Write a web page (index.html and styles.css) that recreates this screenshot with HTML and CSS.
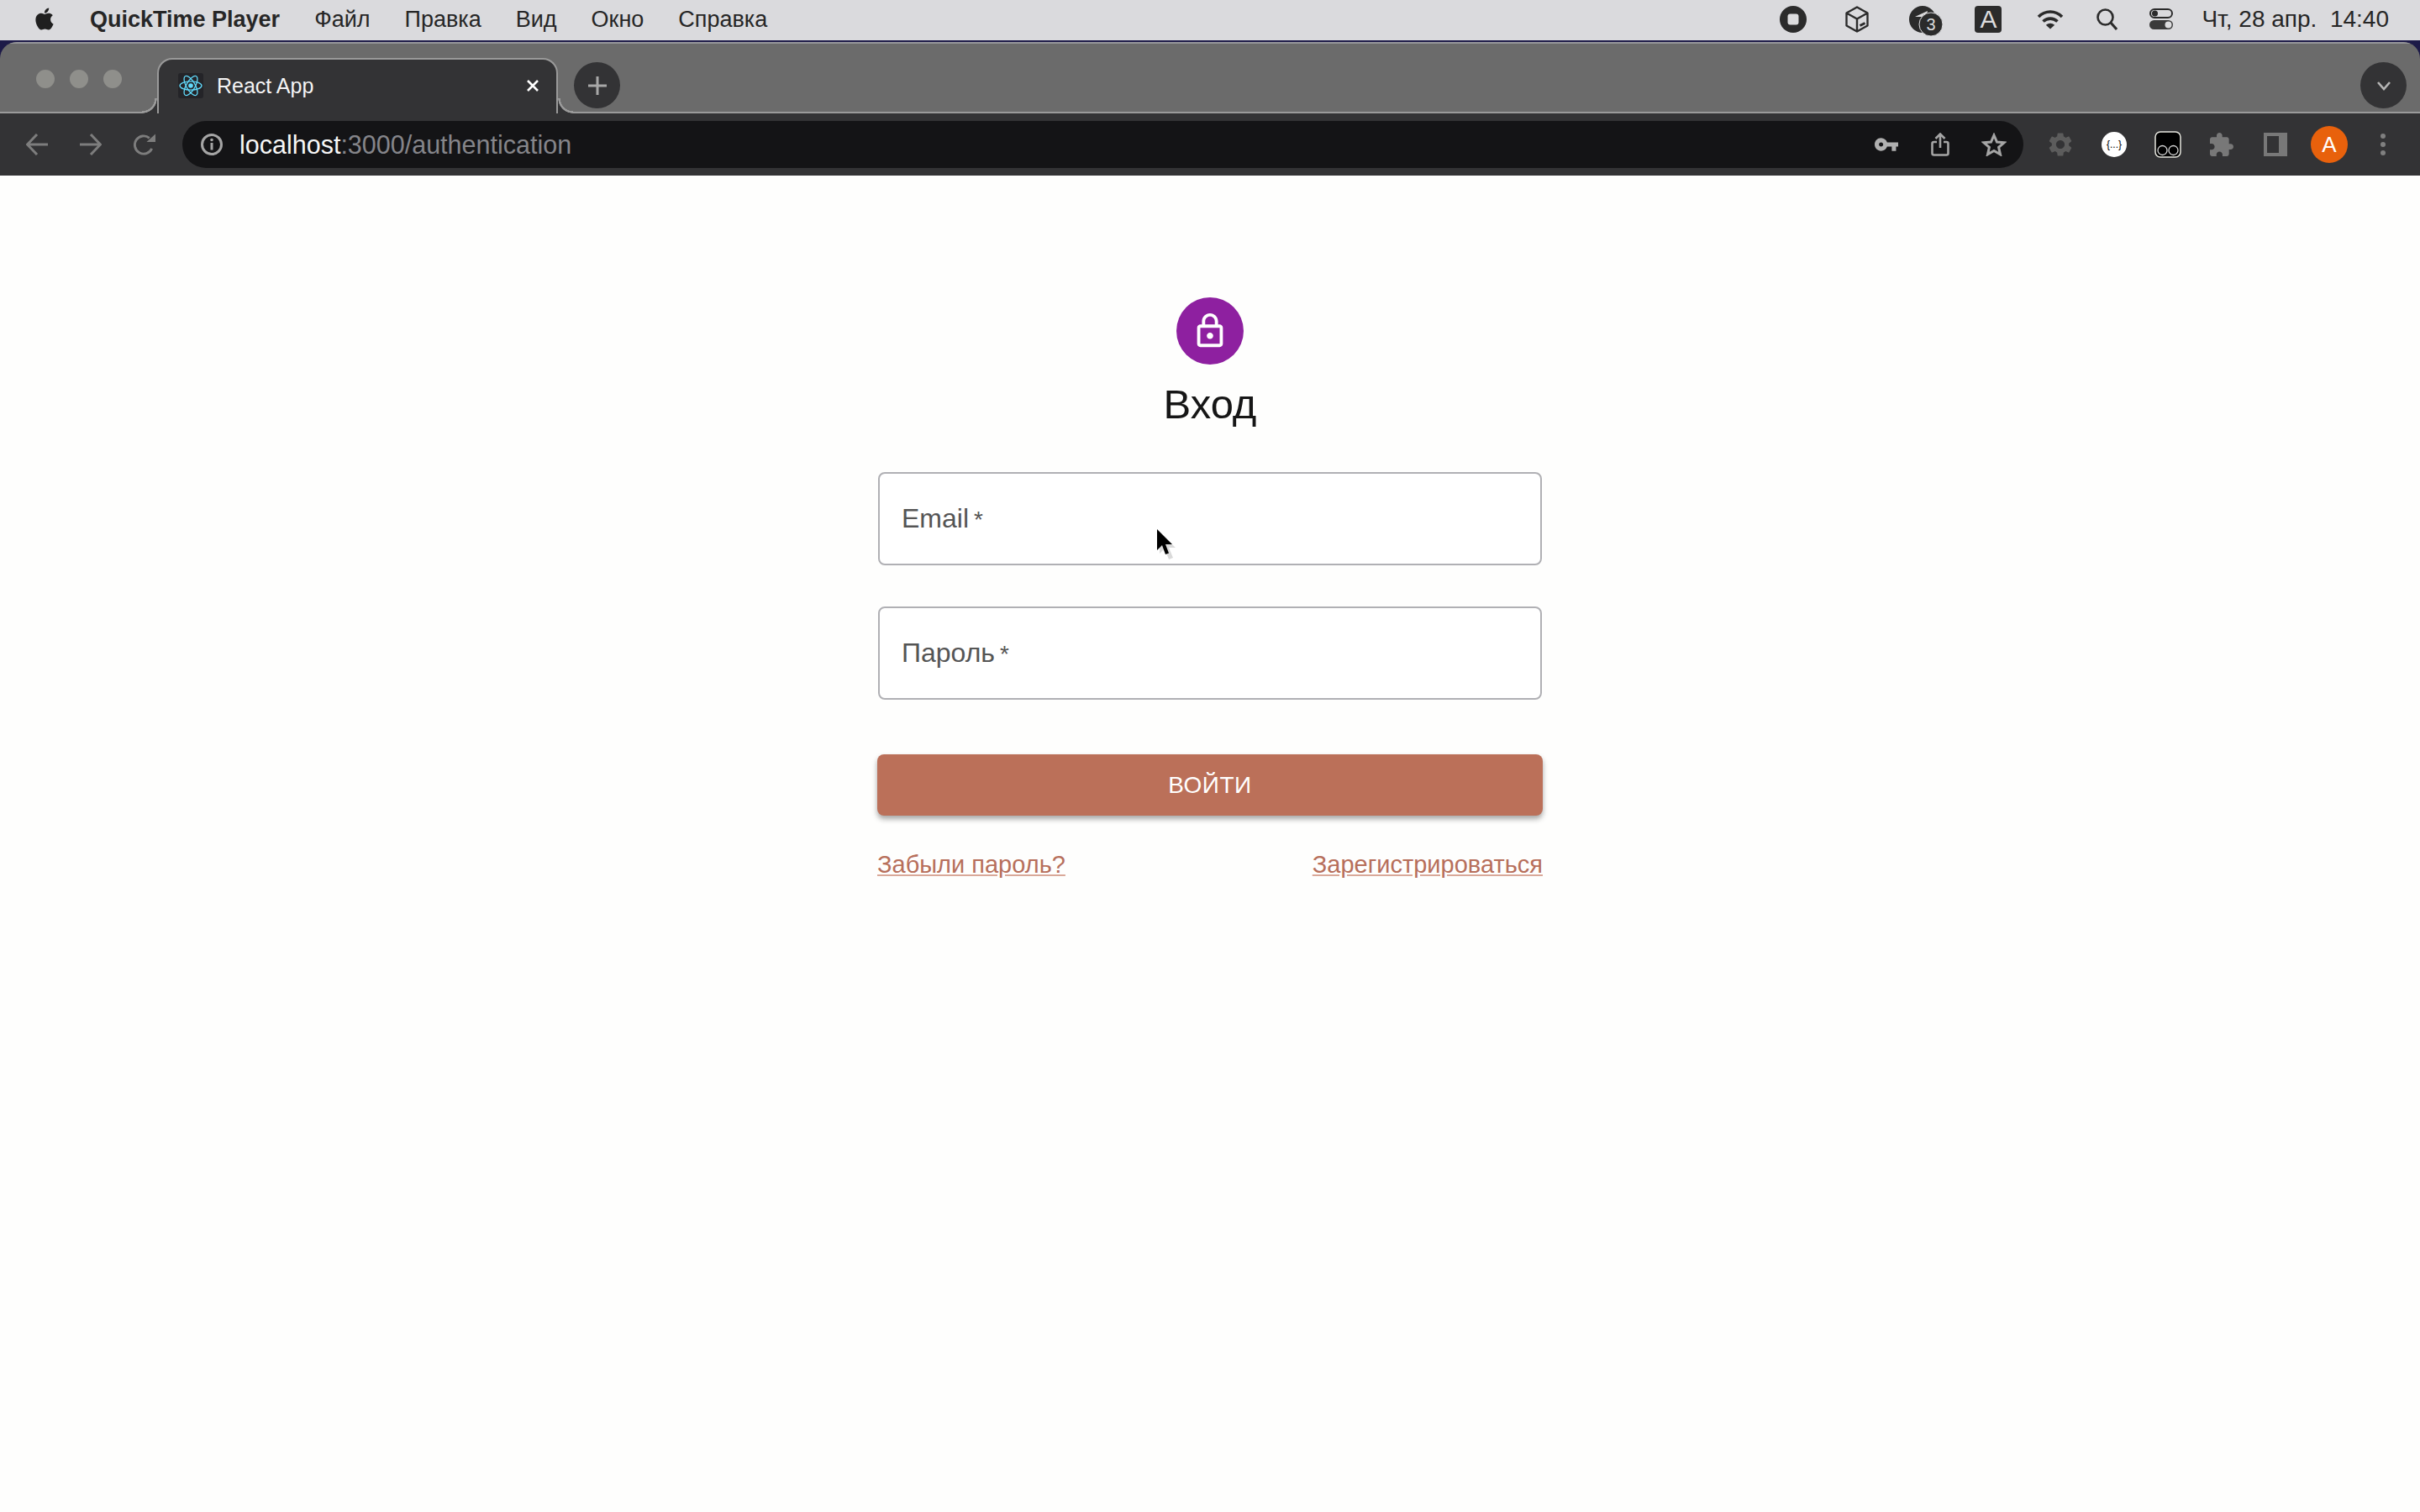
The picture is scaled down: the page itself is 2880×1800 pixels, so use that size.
FILE: index.html
```html
<!DOCTYPE html>
<html lang="ru">
  <head>
    <meta charset="UTF-8" />
    <title>React App</title>
    <link rel="stylesheet" href="styles.css">
  </head>
  <body>
    <!-- macOS menu bar -->
    <header class="menubar">
      <svg class="apple" viewBox="0 0 24 24"><path d="M12.152 6.896c-.948 0-2.415-1.078-3.96-1.04-2.04.027-3.91 1.183-4.961 3.014-2.117 3.675-.546 9.103 1.519 12.09 1.013 1.454 2.208 3.09 3.792 3.039 1.52-.065 2.09-.987 3.935-.987 1.831 0 2.35.987 3.96.948 1.637-.026 2.676-1.48 3.676-2.948 1.156-1.688 1.636-3.325 1.662-3.415-.039-.013-3.182-1.221-3.22-4.857-.026-3.04 2.48-4.494 2.597-4.559-1.429-2.09-3.623-2.324-4.39-2.376-2-.156-3.675 1.09-4.61 1.09zM15.53 3.83c.843-1.012 1.4-2.427 1.245-3.83-1.207.052-2.662.805-3.532 1.818-.78.896-1.454 2.338-1.273 3.714 1.338.104 2.715-.688 3.559-1.701"/></svg>
      <nav class="menu">
        <span class="menu-app">QuickTime Player</span>
        <span>Файл</span>
        <span>Правка</span>
        <span>Вид</span>
        <span>Окно</span>
        <span>Справка</span>
      </nav>
      <div class="status">
        <svg class="st-stop" viewBox="0 0 32 32"><circle cx="16" cy="16" r="16" fill="#2b2b2b"/><rect x="9.5" y="9.5" width="13" height="13" rx="3" fill="#dcdcde"/></svg>
        <svg class="st-box" viewBox="0 0 28 32"><path d="M14 1.5 26.5 8.5V23.5L14 30.5 1.5 23.5V8.5ZM1.5 8.5 14 15.5 26.5 8.5M14 15.5V30.5" fill="none" stroke="#2b2b2b" stroke-width="2.4" stroke-linejoin="round"/><path d="M17.5 23.5 23.5 20.5" stroke="#2b2b2b" stroke-width="3"/></svg>
        <svg class="st-badge" viewBox="0 0 40 36"><circle cx="16" cy="16" r="16" fill="#2b2b2b"/><path d="M7 13 22 6 19 18 15 13Z" fill="#dcdcde"/><circle cx="26" cy="22" r="14" fill="#2b2b2b" stroke="#dcdcde" stroke-width="1"/><text x="26" y="29" class="st-badge-num">3</text></svg>
        <span class="st-lang">A</span>
        <svg class="st-wifi" viewBox="0 0 32 24"><path d="M2 9C10 1 22 1 30 9M7.5 14.5C12.500 10 19.500 10 24.500 14.500" fill="none" stroke="#2b2b2b" stroke-width="3.600"/><path d="M16 23.500 10.800 18.800C14 16 18 16 21.200 18.800Z" fill="#2b2b2b"/></svg>
        <svg class="st-search" viewBox="0 0 25 26"><circle cx="10.500" cy="10.500" r="9" fill="none" stroke="#2b2b2b" stroke-width="2.600"/><path d="M17 17 24 25" stroke="#2b2b2b" stroke-width="3"/></svg>
        <svg class="st-control" viewBox="0 0 28 26"><rect x="1" y="1" width="26" height="10" rx="5" fill="none" stroke="#2b2b2b" stroke-width="2"/><circle cx="6.500" cy="6" r="3.500" fill="#2b2b2b"/><rect y="14" width="28" height="11" rx="5.500" fill="#3a3a3a"/><circle cx="22.500" cy="19.500" r="4" fill="#dcdcde"/></svg>
        <span class="clock">Чт, 28 апр.  14:40</span>
      </div>
    </header>

    <!-- Browser window -->
    <div class="window">
      <div class="tabstrip">
        <div class="lights">
          <i></i><i></i><i></i>
        </div>
        <div class="tab">
          <svg class="favicon" viewBox="0 0 30 30">
            <rect width="30" height="30" rx="3" fill="#242428"/>
            <circle cx="15" cy="15" r="2.800" fill="#61dafb"/>
            <g fill="none" stroke="#61dafb" stroke-width="1.300">
              <ellipse cx="15" cy="15" rx="13" ry="5.200"/>
              <ellipse cx="15" cy="15" rx="13" ry="5.200" transform="rotate(60 15 15)"/>
              <ellipse cx="15" cy="15" rx="13" ry="5.200" transform="rotate(120 15 15)"/>
            </g>
          </svg>
          <span class="tab-title">React App</span>
          <svg class="tab-close" viewBox="0 0 16 16"><path d="M2 2 14 14M14 2 2 14" stroke="#fff" stroke-width="2.600"/></svg>
        </div>
        <button class="round-btn new-tab">
          <svg viewBox="0 0 24 24"><path d="M12 1V23M1 12H23" stroke="#a8a8a8" stroke-width="3"/></svg>
        </button>
        <button class="round-btn tab-list">
          <svg viewBox="0 0 18 12"><path d="M2 2 9 10 16 2" fill="none" stroke="#b5b5b5" stroke-width="2.600"/></svg>
        </button>
      </div>

      <div class="toolbar">
        <div class="tool"><svg class="nav-icon" viewBox="0 0 26 26"><path d="M26 13H2M13 1 1.500 13 13 25" fill="none" stroke="#7d7d7d" stroke-width="3"/></svg></div>
        <div class="tool"><svg class="nav-icon" viewBox="0 0 26 26"><path d="M0 13H24M13 1 24.500 13 13 25" fill="none" stroke="#7d7d7d" stroke-width="3"/></svg></div>
        <div class="tool"><svg class="nav-icon" viewBox="0 0 27 26"><path d="M22.500 18A11 11 0 1 1 19.500 5" fill="none" stroke="#7d7d7d" stroke-width="3"/><path d="M16 10H27V0Z" fill="#7d7d7d"/></svg></div>

        <div class="omnibox">
          <svg class="info" viewBox="0 0 28 28"><circle cx="14" cy="14" r="11.500" fill="none" stroke="#a5a5a5" stroke-width="3"/><circle cx="14" cy="8.500" r="1.800" fill="#a5a5a5"/><path d="M14 12V20.500" stroke="#a5a5a5" stroke-width="3"/></svg>
          <span class="url"><b>localhost</b>:3000/authentication</span>
          <div class="omni-actions">
            <div class="tool"><svg class="key" viewBox="1 6 22 12"><path d="M12.650 10C11.830 7.670 9.610 6 7 6c-3.310 0-6 2.690-6 6s2.690 6 6 6c2.610 0 4.830-1.670 5.650-4H17v4h4v-4h2v-4H12.650zM7 14c-1.100 0-2-.900-2-2s.900-2 2-2 2 .900 2 2-.900 2-2 2z" fill="#b0b0b0"/></svg></div>
            <div class="tool"><svg class="share" viewBox="0 0 22 28"><path d="M7 11H3.500A2 2 0 0 0 1.500 13V24.500A2 2 0 0 0 3.500 26.500H18.500A2 2 0 0 0 20.500 24.500V13A2 2 0 0 0 18.500 11H15M11 18V2M5.500 7 11 1.500 16.500 7" fill="none" stroke="#a5a5a5" stroke-width="2.600"/></svg></div>
            <div class="tool"><svg class="star" viewBox="0 0 30 28"><path d="M15 3 18.500 11 27 11.800 20.600 17.400 22.500 25.800 15 21.400 7.500 25.800 9.400 17.400 3 11.800 11.500 11Z" fill="none" stroke="#a5a5a5" stroke-width="3" stroke-linejoin="miter"/></svg></div>
          </div>
        </div>

        <div class="tool"><svg class="ext-gear" viewBox="0 0 24 24"><path d="M19.140 12.940c.04-.3.06-.61.06-.94 0-.32-.02-.64-.07-.94l2.030-1.580c.18-.14.23-.41.12-.61l-1.920-3.320c-.12-.22-.37-.29-.59-.22l-2.390.96c-.5-.38-1.030-.7-1.620-.94l-.36-2.540c-.04-.24-.24-.41-.48-.41h-3.840c-.24 0-.43.17-.47.41l-.36 2.540c-.59.24-1.130.57-1.620.94l-2.390-.96c-.22-.08-.47 0-.59.22L2.740 8.870c-.12.21-.08.47.12.61l2.030 1.580c-.05.3-.09.63-.09.94s.02.64.07.94l-2.030 1.580c-.18.14-.23.41-.12.61l1.920 3.320c.12.22.37.29.59.22l2.390-.96c.5.38 1.030.7 1.620.94l.36 2.540c.05.24.24.41.48.41h3.840c.24 0 .44-.17.47-.41l.36-2.540c.59-.24 1.130-.56 1.620-.94l2.390.96c.22.08.47 0 .59-.22l1.920-3.320c.12-.22.07-.47-.12-.61l-2.010-1.580zM12 15.600c-1.980 0-3.600-1.620-3.600-3.600s1.620-3.600 3.600-3.600 3.600 1.620 3.600 3.600-1.620 3.600-3.600 3.600z" fill="#5c5c5c"/></svg></div>
        <div class="tool"><span class="ext-json">{...}</span></div>
        <div class="tool"><svg class="ext-glasses" viewBox="0 0 32 32"><rect x="1" y="1" width="30" height="30" rx="6" fill="#000" stroke="#e8e8e0" stroke-width="1.500"/><circle cx="9.500" cy="23" r="5.500" fill="none" stroke="#d8d8d8" stroke-width="1.300"/><circle cx="22.500" cy="23" r="5.500" fill="none" stroke="#d8d8d8" stroke-width="1.300"/></svg></div>
        <div class="tool"><svg class="ext-puzzle" viewBox="2 1 21 21"><path d="M20.500 11H19V7c0-1.100-.9-2-2-2h-4V3.500C13 2.120 11.880 1 10.500 1S8 2.120 8 3.500V5H4c-1.100 0-1.990.9-1.990 2v3.800H3.500c1.490 0 2.700 1.210 2.700 2.700s-1.210 2.700-2.700 2.700H2V20c0 1.100.9 2 2 2h3.800v-1.500c0-1.490 1.210-2.700 2.700-2.700 1.490 0 2.700 1.210 2.700 2.700V22H17c1.100 0 2-.9 2-2v-4h1.500c1.380 0 2.500-1.120 2.500-2.500S21.880 11 20.500 11z" fill="#787878"/></svg></div>
        <div class="tool"><span class="ext-panel"></span></div>
        <div class="tool"><span class="profile">A</span></div>
        <div class="tool"><span class="kebab"><i></i><i></i><i></i></span></div>
      </div>

      <!-- Page content -->
      <main class="page">
        <div class="signin">
          <div class="lock-avatar">
            <svg viewBox="0 0 24 24"><path d="M18 8h-1V6c0-2.760-2.240-5-5-5S7 3.240 7 6v2H6c-1.100 0-2 .9-2 2v10c0 1.100.9 2 2 2h12c1.100 0 2-.9 2-2V10c0-1.100-.9-2-2-2zM9 6c0-1.660 1.340-3 3-3s3 1.340 3 3v2H9V6zm9 14H6V10h12v10zm-6-3c1.100 0 2-.9 2-2s-.9-2-2-2-2 .9-2 2 .9 2 2 2z" fill="#fff"/></svg>
          </div>
          <h1 class="title">Вход</h1>
          <form class="form">
            <div class="field"><label>Email<span class="req">*</span></label></div>
            <div class="field"><label>Пароль<span class="req">*</span></label></div>
            <button class="submit" type="button">Войти</button>
            <div class="links">
              <a href="#">Забыли пароль?</a>
              <a href="#">Зарегистрироваться</a>
            </div>
          </form>
        </div>
      </main>
    </div>

    <!-- Mouse pointer caught in the capture -->
    <svg class="cursor" viewBox="0 0 24 38">
      <path d="M4 4 4 29 10 23 15 36 20 34 15 22 23 22Z" fill="#bbb" opacity="0.55"/>
      <path d="M1 0 1 25 7 19 11 30 15 28.500 11 18 19 18Z" fill="#000"/>
    </svg>
  </body>
</html>
```

FILE: styles.css
```css
* {
  box-sizing: border-box;
}

body {
  margin: 0;
  height: 1800px;
  overflow: hidden;
  background: #1d1a48;
  font-family: "Liberation Sans", Arial, sans-serif;
}

/* Menu bar */
.menubar {
  display: flex;
  align-items: center;
  height: 48px;
  padding: 0 37px 2px 40px;
  background: #dadadd;
  color: #262626;
  font-size: 27px;
}

.apple {
  width: 26px;
  height: 31px;
  margin-top: -2px;
  fill: #1f1f1f;
}

.menu {
  display: flex;
  gap: 41px;
  margin-left: 41px;
  white-space: nowrap;
}

.menu-app {
  font-weight: 700;
}

.status {
  display: flex;
  align-items: center;
  margin-left: auto;
}

.st-stop {
  width: 32px;
  height: 32px;
}

.st-box {
  width: 28px;
  height: 32px;
  margin-left: 46px;
}

.st-badge {
  width: 40px;
  height: 36px;
  margin: 3px 0 0 48px;
}

.st-badge-num {
  fill: #dcdcde;
  font-size: 20px;
  text-anchor: middle;
}

.st-lang {
  width: 32px;
  height: 32px;
  margin-left: 38px;
  border-radius: 4px;
  background: #2b2b2b;
  color: #dcdcde;
  font-size: 30px;
  line-height: 32px;
  text-align: center;
}

.st-wifi {
  width: 32px;
  height: 24px;
  margin-left: 42px;
}

.st-search {
  width: 25px;
  height: 26px;
  margin-left: 39px;
}

.st-control {
  width: 28px;
  height: 26px;
  margin-left: 38px;
}

.clock {
  margin-left: 34px;
  font-size: 28px;
  white-space: pre;
}

/* Browser chrome */
.window {
  margin-top: 2px;
  border-radius: 20px 20px 0 0;
  overflow: hidden;
}

.tabstrip {
  display: flex;
  align-items: flex-start;
  height: 85px;
  padding-right: 16px;
  border-top: 2px solid #96969a;
  border-bottom: 2px solid #9a9a9a;
  background: #6b6b6b;
}

.lights {
  display: flex;
  gap: 18px;
  width: 187px;
  padding: 31px 0 0 43px;
}

.lights i {
  width: 22px;
  height: 22px;
  border-radius: 50%;
  background: #8f8f8b;
}

.tab {
  position: relative;
  z-index: 1;
  display: flex;
  align-items: center;
  width: 477px;
  height: 66px;
  margin-top: 17px;
  padding: 0 20px 2px 23px;
  border: 2px solid #9a9a9a;
  border-bottom: 0;
  border-radius: 18px 18px 0 0;
  background: #333335;
  color: #f5f5f5;
  font-size: 25px;
}

/* inverted corners at the foot of the tab */
.tab::before,
.tab::after {
  content: "";
  position: absolute;
  bottom: 0;
  width: 18px;
  height: 18px;
}

.tab::before {
  left: -20px;
  background: radial-gradient(circle at 0 0, transparent 15px, #9a9a9a 15.500px, #9a9a9a 17.500px, #333335 18px);
}

.tab::after {
  right: -20px;
  background: radial-gradient(circle at 100% 0, transparent 15px, #9a9a9a 15.500px, #9a9a9a 17.500px, #333335 18px);
}

.favicon {
  width: 30px;
  height: 30px;
}

.tab-title {
  margin-left: 16px;
}

.tab-close {
  width: 16px;
  height: 16px;
  margin-left: auto;
}

.round-btn {
  display: flex;
  align-items: center;
  justify-content: center;
  width: 55px;
  height: 55px;
  margin-top: 22px;
  padding: 0;
  border: 0;
  border-radius: 50%;
  background: #333335;
}

.new-tab {
  margin-left: 19px;
}

.new-tab svg {
  width: 24px;
  height: 24px;
}

.tab-list {
  margin-left: auto;
}

.tab-list svg {
  width: 18px;
  height: 12px;
}

.toolbar {
  display: flex;
  align-items: center;
  height: 74px;
  padding: 0 12px;
  background: #333335;
}

.tool {
  display: flex;
  align-items: center;
  justify-content: center;
  flex: none;
  width: 64px;
}

.nav-icon {
  width: 26px;
  height: 26px;
}

.omnibox {
  display: flex;
  flex: 1;
  align-items: center;
  height: 56px;
  margin: 0 12px 0 13px;
  padding: 0 3px 0 21px;
  border-radius: 28px;
  background: #141416;
}

.info {
  width: 28px;
  height: 28px;
}

.url {
  margin-left: 19px;
  color: #85858a;
  font-size: 30.5px;
}

.url b {
  color: #f7f7f7;
  font-weight: 400;
}

.omni-actions {
  display: flex;
  margin-left: auto;
}

.key {
  width: 28px;
  height: 16px;
}

.share {
  width: 22px;
  height: 28px;
}

.star {
  width: 30px;
  height: 28px;
}

.ext-gear {
  width: 34px;
  height: 34px;
}

.ext-json {
  width: 30px;
  height: 30px;
  border-radius: 50%;
  background: #fff;
  color: #000;
  font-size: 12px;
  line-height: 30px;
  text-align: center;
  white-space: nowrap;
}

.ext-glasses {
  width: 32px;
  height: 32px;
}

.ext-puzzle {
  width: 28px;
  height: 28px;
}

.ext-panel {
  width: 28px;
  height: 28px;
  border: solid #787878;
  border-width: 4px 10px 4px 4px;
  background: #333335;
}

.profile {
  width: 44px;
  height: 44px;
  border-radius: 50%;
  background: #e8610c;
  color: #fff;
  font-size: 26px;
  line-height: 44px;
  text-align: center;
}

.kebab {
  display: flex;
  flex-direction: column;
  gap: 4px;
}

.kebab i {
  width: 6px;
  height: 6px;
  border-radius: 50%;
  background: #808080;
}

/* Sign in page */
.page {
  height: 1591px;
  background: #fefefd;
}

.signin {
  display: flex;
  flex-direction: column;
  align-items: center;
  width: 790px;
  margin: 0 auto;
  padding-top: 145px;
}

.lock-avatar {
  display: flex;
  align-items: center;
  justify-content: center;
  width: 80px;
  height: 80px;
  border-radius: 50%;
  background: #8e20a0;
}

.lock-avatar svg {
  width: 46px;
  height: 46px;
}

.title {
  margin: 21px 0 0;
  color: #161616;
  font-size: 49px;
  font-weight: 400;
  line-height: 53px;
}

.form {
  display: flex;
  flex-direction: column;
  width: 100%;
  margin-top: 54px;
}

.field {
  display: flex;
  align-items: center;
  height: 111px;
  margin-bottom: 49px;
  padding-left: 26px;
  border: 2px solid #b0b0b4;
  border-radius: 8px;
  background: #fff;
  color: #555;
  font-size: 32px;
}

.req {
  margin-left: 6px;
  font-size: 28px;
}

.submit {
  height: 73px;
  margin: 16px -1px 0;
  border: 0;
  border-radius: 8px;
  background: #bb7059;
  box-shadow: 0 4px 6px rgba(0, 0, 0, 0.35);
  color: #fff;
  font-family: inherit;
  font-size: 28px;
  letter-spacing: 0.5px;
  text-transform: uppercase;
}

.links {
  display: flex;
  justify-content: space-between;
  margin: 42px -1px 0;
  font-size: 29px;
}

.links a {
  color: #b76f5b;
  text-decoration-color: #d9a899;
}

.cursor {
  position: absolute;
  top: 630px;
  left: 1376px;
  width: 24px;
  height: 38px;
}
```
